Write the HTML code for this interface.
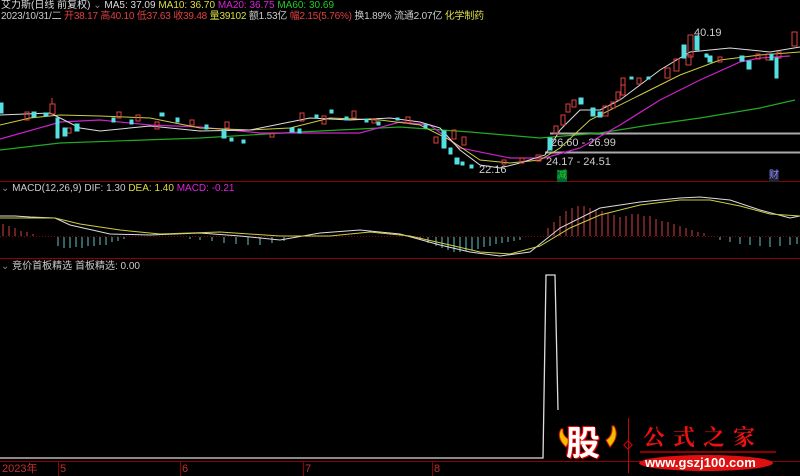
<!DOCTYPE html>
<html><head><meta charset="utf-8"><style>
body{margin:0;background:#000;width:800px;height:476px;overflow:hidden;font-family:"Liberation Sans","Noto Sans CJK SC",sans-serif;}
.t{position:absolute;font-size:10px;white-space:nowrap;line-height:12px}
</style></head><body>
<svg width="800" height="476" style="position:absolute;left:0;top:0">
<g stroke="#8b0000" stroke-width="1" fill="none">
<line x1="0" y1="181.5" x2="800" y2="181.5"/>
<line x1="0" y1="258.5" x2="800" y2="258.5"/>
<line x1="0" y1="461.5" x2="800" y2="461.5"/>
<line x1="58.5" y1="462" x2="58.5" y2="476"/><line x1="180.5" y1="462" x2="180.5" y2="476"/>
<line x1="303.5" y1="462" x2="303.5" y2="476"/><line x1="432.5" y1="462" x2="432.5" y2="476"/>
<line x1="0" y1="236.5" x2="800" y2="236.5" stroke-dasharray="1 2"/>
</g>
<line x1="550" y1="133.5" x2="800" y2="133.5" stroke="#aaa" stroke-width="2"/>
<line x1="545" y1="152.5" x2="800" y2="152.5" stroke="#aaa" stroke-width="2"/>
<polyline fill="none" stroke="#22aa22" stroke-width="1.2" points="0,150 60,143 200,138 300,132 400,127 470,132 540,138 600,133 650,125 700,118 760,108 795,100"/>
<polyline fill="none" stroke="#cc22cc" stroke-width="1.2" points="0,139 50,125 60,122 100,120 150,125 200,127 260,133 300,133 360,133 400,122 430,125 460,148 510,158 545,158 580,148 620,125 660,100 700,80 740,62 760,58 790,56"/>
<polyline fill="none" stroke="#cccc44" stroke-width="1" points="0,125 30,118 60,115 100,116 150,118 200,128 250,130 290,128 330,118 380,120 420,125 450,140 480,160 510,163 540,160 560,148 590,120 640,95 680,75 720,60 760,55 800,52"/>
<polyline fill="none" stroke="#ddd" stroke-width="1" points="0,115 50,113 60,118 80,128 100,131 150,126 200,131 250,130 280,124 310,118 350,120 390,118 420,122 440,128 460,150 480,165 500,168 520,163 545,155 560,130 580,110 600,110 620,100 660,70 690,52 730,48 770,52 800,47"/>
<g stroke="#e04040" fill="none" stroke-width="1">
<rect x="25" y="112" width="4" height="8"/><rect x="50" y="104" width="5" height="10"/><line x1="52" y1="98" x2="52" y2="104"/>
<rect x="67" y="128" width="4" height="5"/><rect x="117" y="112" width="4" height="6"/><rect x="136" y="115" width="4" height="6"/>
<rect x="155" y="122" width="4" height="7"/><rect x="190" y="120" width="4" height="5"/><rect x="225" y="122" width="4" height="6"/>
<rect x="270" y="133" width="4" height="4"/><rect x="300" y="113" width="4" height="8"/><rect x="322" y="116" width="4" height="8"/>
<rect x="352" y="111" width="4" height="7"/><rect x="372" y="119" width="4" height="4"/><rect x="406" y="117" width="4" height="6"/>
<rect x="434" y="137" width="4" height="6"/><rect x="452" y="130" width="4" height="9"/><rect x="462" y="137" width="4" height="8"/>
<rect x="502" y="160" width="4" height="4"/><rect x="520" y="158" width="4" height="5"/><rect x="536" y="155" width="5" height="6"/>
<rect x="554" y="126" width="4" height="8"/><rect x="561" y="115" width="4" height="10"/><rect x="566" y="104" width="4" height="8"/>
<rect x="572" y="100" width="4" height="7"/><rect x="603" y="106" width="5" height="10"/><rect x="611" y="102" width="4" height="6"/>
<rect x="616" y="92" width="4" height="8"/><rect x="621" y="85" width="4" height="10"/><rect x="621" y="78" width="4" height="7"/>
<rect x="637" y="78" width="4" height="6"/><rect x="665" y="68" width="5" height="10"/><rect x="674" y="59" width="5" height="12"/>
<rect x="686" y="55" width="5" height="10"/><rect x="688" y="35" width="5" height="22"/><rect x="718" y="57" width="4" height="5"/>
<rect x="756" y="54" width="4" height="5"/><rect x="766" y="54" width="4" height="6"/><rect x="777" y="52" width="4" height="6"/>
<rect x="792" y="32" width="5" height="14"/>
</g>
<g fill="#54e0e0" stroke="#54e0e0">
<rect x="0" y="103" width="3" height="10"/><rect x="32" y="112" width="4" height="5"/><rect x="44" y="113" width="4" height="3"/>
<rect x="56" y="118" width="3" height="20"/><rect x="63" y="128" width="4" height="8"/><rect x="75" y="124" width="4" height="7"/>
<rect x="112" y="118" width="3" height="4"/><rect x="130" y="120" width="3" height="4"/><rect x="160" y="113" width="4" height="3"/>
<rect x="176" y="118" width="3" height="4"/><rect x="205" y="125" width="3" height="4"/><rect x="222" y="130" width="4" height="8"/>
<rect x="230" y="138" width="3" height="3"/><rect x="242" y="140" width="3" height="3"/><rect x="290" y="128" width="4" height="4"/>
<rect x="298" y="129" width="3" height="4"/><rect x="315" y="115" width="3" height="3"/><rect x="330" y="110" width="3" height="3"/>
<rect x="345" y="117" width="3" height="3"/><rect x="365" y="119" width="3" height="3"/><rect x="377" y="122" width="3" height="3"/>
<rect x="396" y="118" width="3" height="2"/><rect x="424" y="125" width="3" height="3"/><rect x="442" y="131" width="4" height="17"/>
<rect x="449" y="148" width="3" height="6"/><rect x="455" y="158" width="4" height="6"/><rect x="461" y="162" width="3" height="3"/>
<rect x="470" y="165" width="3" height="3"/><rect x="548" y="138" width="4" height="12"/><rect x="579" y="98" width="4" height="6"/>
<rect x="591" y="108" width="4" height="8"/><rect x="598" y="112" width="4" height="5"/><rect x="630" y="77" width="3" height="2"/>
<rect x="647" y="77" width="3" height="2"/><rect x="682" y="45" width="4" height="13"/><rect x="695" y="36" width="4" height="14"/>
<rect x="705" y="54" width="3" height="3"/><rect x="708" y="56" width="4" height="6"/><rect x="740" y="56" width="4" height="5"/>
<rect x="747" y="61" width="4" height="8"/><rect x="770" y="54" width="3" height="6"/><rect x="775" y="58" width="3" height="20"/>
</g>
<g stroke="#d04040">
<line x1="3" y1="236" x2="3" y2="224"/><line x1="9" y1="236" x2="9" y2="226"/><line x1="15" y1="236" x2="15" y2="228"/><line x1="21" y1="236" x2="21" y2="231"/><line x1="27" y1="236" x2="27" y2="232"/><line x1="33" y1="236" x2="33" y2="234"/>
<line x1="548" y1="236" x2="548" y2="228"/><line x1="554" y1="236" x2="554" y2="222"/><line x1="560" y1="236" x2="560" y2="216"/><line x1="566" y1="236" x2="566" y2="211"/><line x1="572" y1="236" x2="572" y2="208"/><line x1="578" y1="236" x2="578" y2="206"/><line x1="584" y1="236" x2="584" y2="206"/><line x1="590" y1="236" x2="590" y2="208"/><line x1="596" y1="236" x2="596" y2="210"/><line x1="602" y1="236" x2="602" y2="211"/><line x1="608" y1="236" x2="608" y2="213"/><line x1="614" y1="236" x2="614" y2="215"/><line x1="620" y1="236" x2="620" y2="217"/><line x1="626" y1="236" x2="626" y2="216"/><line x1="632" y1="236" x2="632" y2="214"/><line x1="638" y1="236" x2="638" y2="214"/><line x1="644" y1="236" x2="644" y2="216"/><line x1="650" y1="236" x2="650" y2="216"/><line x1="656" y1="236" x2="656" y2="219"/><line x1="662" y1="236" x2="662" y2="221"/><line x1="668" y1="236" x2="668" y2="222"/><line x1="674" y1="236" x2="674" y2="224"/><line x1="680" y1="236" x2="680" y2="226"/><line x1="686" y1="236" x2="686" y2="228"/><line x1="692" y1="236" x2="692" y2="230"/><line x1="698" y1="236" x2="698" y2="232"/><line x1="704" y1="236" x2="704" y2="233"/>
</g>
<g stroke="#60c8c8">
<line x1="58" y1="237" x2="58" y2="246"/><line x1="64" y1="237" x2="64" y2="248"/><line x1="70" y1="237" x2="70" y2="248"/><line x1="76" y1="237" x2="76" y2="247"/><line x1="82" y1="237" x2="82" y2="248"/><line x1="88" y1="237" x2="88" y2="246"/><line x1="94" y1="237" x2="94" y2="246"/><line x1="100" y1="237" x2="100" y2="245"/><line x1="106" y1="237" x2="106" y2="245"/><line x1="112" y1="237" x2="112" y2="242"/><line x1="118" y1="237" x2="118" y2="241"/><line x1="124" y1="237" x2="124" y2="239"/>
<line x1="190" y1="237" x2="190" y2="239"/><line x1="200" y1="237" x2="200" y2="240"/><line x1="212" y1="237" x2="212" y2="241"/><line x1="224" y1="237" x2="224" y2="243"/><line x1="236" y1="237" x2="236" y2="244"/><line x1="248" y1="237" x2="248" y2="245"/><line x1="260" y1="237" x2="260" y2="245"/><line x1="272" y1="237" x2="272" y2="243"/><line x1="284" y1="237" x2="284" y2="241"/>
<line x1="420" y1="237" x2="420" y2="240"/><line x1="428" y1="237" x2="428" y2="243"/><line x1="436" y1="237" x2="436" y2="246"/><line x1="442" y1="237" x2="442" y2="248"/><line x1="448" y1="237" x2="448" y2="250"/><line x1="454" y1="237" x2="454" y2="252"/><line x1="460" y1="237" x2="460" y2="252"/><line x1="466" y1="237" x2="466" y2="251"/><line x1="472" y1="237" x2="472" y2="250"/><line x1="478" y1="237" x2="478" y2="249"/><line x1="484" y1="237" x2="484" y2="247"/><line x1="490" y1="237" x2="490" y2="246"/><line x1="496" y1="237" x2="496" y2="244"/><line x1="502" y1="237" x2="502" y2="243"/><line x1="508" y1="237" x2="508" y2="242"/><line x1="514" y1="237" x2="514" y2="241"/><line x1="520" y1="237" x2="520" y2="240"/>
<line x1="720" y1="237" x2="720" y2="240"/><line x1="730" y1="237" x2="730" y2="242"/><line x1="740" y1="237" x2="740" y2="244"/><line x1="750" y1="237" x2="750" y2="245"/><line x1="760" y1="237" x2="760" y2="246"/><line x1="770" y1="237" x2="770" y2="247"/><line x1="780" y1="237" x2="780" y2="246"/><line x1="790" y1="237" x2="790" y2="245"/><line x1="797" y1="237" x2="797" y2="244"/>
</g>
<polyline fill="none" stroke="#ddd" stroke-width="1" points="0,216 15,216 30,217 55,218 70,225 110,234 150,235 200,233 240,236 280,240 320,233 360,230 400,234 440,245 470,252 500,256 530,252 560,228 600,208 640,202 680,198 700,197 730,200 760,210 790,218 800,216"/>
<polyline fill="none" stroke="#cccc44" stroke-width="1" points="0,218 30,218 55,218 80,224 120,230 160,234 220,232 280,236 330,236 370,232 410,236 450,245 480,252 510,254 540,246 570,228 600,215 640,205 680,200 710,200 740,206 770,214 800,216"/>
<polyline fill="none" stroke="#ddd" stroke-width="1.3" points="0,458 543,458 546,275 555,275 558,410"/>
<line x1="628.5" y1="418" x2="628.5" y2="473" stroke="#c00"/>
<rect x="625" y="442" width="6" height="6" transform="rotate(45 628 445)" fill="none" stroke="#d00"/>
<line x1="640" y1="452" x2="776" y2="452" stroke="#b00" stroke-width="1.5"/>
<ellipse cx="706" cy="463" rx="67" ry="8" fill="#e01010"/>
<path d="M561,429 Q556,438 566,447 L570,440 Q562,436 563,429Z M614,426 Q620,436 610,447 L606,440 Q613,436 612,426Z" fill="#f0c000" stroke="#e02000"/>
</svg>
<div class="t" style="left:1px;top:0;color:#ddd">艾力斯(日线 前复权) <span style="color:#888">⌄</span> MA5: 37.09 <span style="color:#dddd44">MA10: 36.70</span> <span style="color:#dd22dd">MA20: 36.75</span> <span style="color:#22cc22">MA60: 30.69</span></div>
<div class="t" style="left:1px;top:11px;color:#ccc;letter-spacing:-0.2px">2023/10/31/二 <span style="color:#e04040">开38.17 高40.10 低37.63 收39.48</span> <span style="color:#dddd44">量39102</span> 额1.53亿 <span style="color:#e04040">幅2.15(5.76%)</span> 换1.89% 流通2.07亿 <span style="color:#dddd44">化学制药</span></div>
<div class="t" style="left:694px;top:27px;color:#ccc;font-size:11px">40.19</div>
<div class="t" style="left:479px;top:164px;color:#ccc;font-size:11px">22.16</div>
<div class="t" style="left:551px;top:137px;color:#ccc;font-size:11px">26.60 - 26.99</div>
<div class="t" style="left:546px;top:156px;color:#ccc;font-size:11px">24.17 - 24.51</div>
<div class="t" style="left:557px;top:170px;color:#2c2;background:#063;font-size:10px">减</div>
<div class="t" style="left:769px;top:170px;color:#88f;background:#223;font-size:10px">财</div>
<div class="t" style="left:1px;top:183px;color:#ccc"><span style="color:#888">⌄</span> MACD(12,26,9) DIF: 1.30 <span style="color:#dddd44">DEA: 1.40</span> <span style="color:#dd22dd">MACD: -0.21</span></div>
<div class="t" style="left:1px;top:261px;color:#ccc"><span style="color:#888">⌄</span> 竞价首板精选 首板精选: 0.00</div>
<div class="t" style="left:2px;top:463px;color:#c03030;font-size:11px">2023年</div>
<div class="t" style="left:60px;top:463px;color:#c03030;font-size:11px">5</div>
<div class="t" style="left:182px;top:463px;color:#c03030;font-size:11px">6</div>
<div class="t" style="left:305px;top:463px;color:#c03030;font-size:11px">7</div>
<div class="t" style="left:434px;top:463px;color:#c03030;font-size:11px">8</div>
<div class="t" style="left:566px;top:424px;font-size:34px;line-height:40px;font-weight:bold;color:#fff;text-shadow:0 0 2px #e00,1px 1px 0 #e00,-1px -1px 0 #e00">股</div>
<div class="t" style="left:643px;top:424px;font-size:22px;line-height:26px;color:#ee1111;font-family:'Noto Serif CJK SC',serif;font-weight:bold;letter-spacing:8px">公式之家</div>
<div class="t" style="left:645px;top:456px;font-size:13px;line-height:14px;font-weight:bold;color:#fff">www.gszj100.com</div>
</body></html>
